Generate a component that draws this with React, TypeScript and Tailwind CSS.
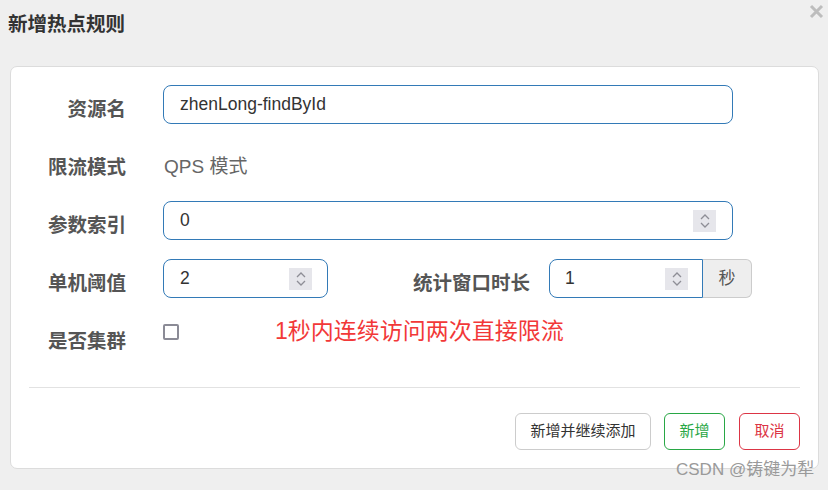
import React from 'react';

const cjk = "font-['Liberation_Sans','Noto_Sans_CJK_SC',sans-serif]";

function Spinner() {
  return (
    <div className="flex h-[22px] w-[23px] flex-col items-center justify-center gap-[2px] bg-[#e6e6eb]">
      <svg width="10" height="6" viewBox="0 0 10 6" fill="none">
        <path d="M1 5L5 1L9 5" stroke="#8e8e96" strokeWidth="1.3" />
      </svg>
      <svg width="10" height="6" viewBox="0 0 10 6" fill="none">
        <path d="M1 1L5 5L9 1" stroke="#8e8e96" strokeWidth="1.3" />
      </svg>
    </div>
  );
}

function Label({ children, className = '' }: { children: React.ReactNode; className?: string }) {
  return (
    <div className={`pt-[11px] text-right text-[19.5px] font-bold leading-[26px] text-[#555] ${className}`}>
      {children}
    </div>
  );
}

export default function App() {
  return (
    <div className={`relative h-[490px] w-[828px] overflow-hidden bg-[#efefef] ${cjk}`}>
      {/* Header */}
      <div className="flex h-[66px] items-start justify-between pl-[8px] pr-[4px] pt-[11px]">
        <h1 className="text-[19.5px] font-bold leading-[26px] text-[#333]">新增热点规则</h1>
        <svg width="15" height="15" viewBox="0 0 15 15" className="mt-[-7px]">
          <path d="M2 2L13 13M13 2L2 13" stroke="#bdbdbd" strokeWidth="3" />
        </svg>
      </div>

      {/* Card */}
      <div className="ml-[10px] w-[809px] rounded-[7px] border border-[#dcdcdc] bg-white pb-[18px] pl-[18px] pr-[18px] pt-[18px]">
        <div className="flex flex-col gap-[19px]">
          {/* 资源名 */}
          <div className="flex items-start gap-[37px]">
            <Label className="w-[97px]">资源名</Label>
            <div className="flex h-[39px] w-[570px] items-center rounded-[8px] border border-[#337ab7] px-[16px] text-[17.5px] text-[#333]">
              zhenLong-findById
            </div>
          </div>

          {/* 限流模式 */}
          <div className="flex h-[39px] items-start gap-[37px]">
            <Label className="w-[97px]">限流模式</Label>
            <div className="pl-[1px] pt-[11px] text-[19px] leading-[26px] text-[#666]">QPS 模式</div>
          </div>

          {/* 参数索引 */}
          <div className="flex items-start gap-[37px]">
            <Label className="w-[97px]">参数索引</Label>
            <div className="flex h-[39px] w-[570px] items-center justify-between rounded-[8px] border border-[#337ab7] pl-[16px] pr-[16px] text-[17.5px] text-[#333]">
              <span>0</span>
              <Spinner />
            </div>
          </div>

          {/* 单机阈值 + 统计窗口时长 */}
          <div className="flex items-start">
            <Label className="w-[97px]">单机阈值</Label>
            <div className="ml-[37px] flex h-[39px] w-[165px] items-center justify-between rounded-[8px] border border-[#337ab7] pl-[16px] pr-[15px] text-[17.5px] text-[#333]">
              <span>2</span>
              <Spinner />
            </div>
            <Label className="ml-[80px] w-[122px]">统计窗口时长</Label>
            <div className="ml-[19px] flex h-[39px]">
              <div className="flex w-[154px] items-center justify-between rounded-l-[8px] border border-[#337ab7] pl-[15px] pr-[14px] text-[17.5px] text-[#333]">
                <span>1</span>
                <Spinner />
              </div>
              <div className="flex w-[49px] items-center justify-center rounded-r-[6px] border border-l-0 border-[#cccccc] bg-[#eeeeee] text-[17px] text-[#555]">
                秒
              </div>
            </div>
          </div>

          {/* 是否集群 */}
          <div className="flex items-start">
            <Label className="w-[97px]">是否集群</Label>
            <div className="ml-[37px] mt-[7px] h-[16px] w-[16px] rounded-[2px] border-2 border-[#8b8b96]" />
            <div className="ml-[96px] mt-[1px] text-[23px] leading-[26px] text-[#f23838]">1秒内连续访问两次直接限流</div>
          </div>
        </div>

        <div className="mt-[33px] border-t border-[#e2e2e2]" />

        {/* Footer buttons */}
        <div className="mt-[25px] flex justify-end gap-[13px]">
          <button className="h-[37px] w-[136px] rounded-[6px] border border-[#cccccc] bg-white text-[15px] text-[#333]">
            新增并继续添加
          </button>
          <button className="h-[37px] w-[61px] rounded-[6px] border border-[#28a745] bg-white text-[15px] text-[#28a745]">
            新增
          </button>
          <button className="ml-[1px] h-[37px] w-[61px] rounded-[6px] border border-[#dc3545] bg-white text-[15px] text-[#dc3545]">
            取消
          </button>
        </div>
      </div>

      {/* Watermark */}
      <div className="absolute left-[676px] top-[458px] text-[17px] leading-[24px] text-[#9a9a9a]">
        CSDN @铸键为犁
      </div>
    </div>
  );
}
